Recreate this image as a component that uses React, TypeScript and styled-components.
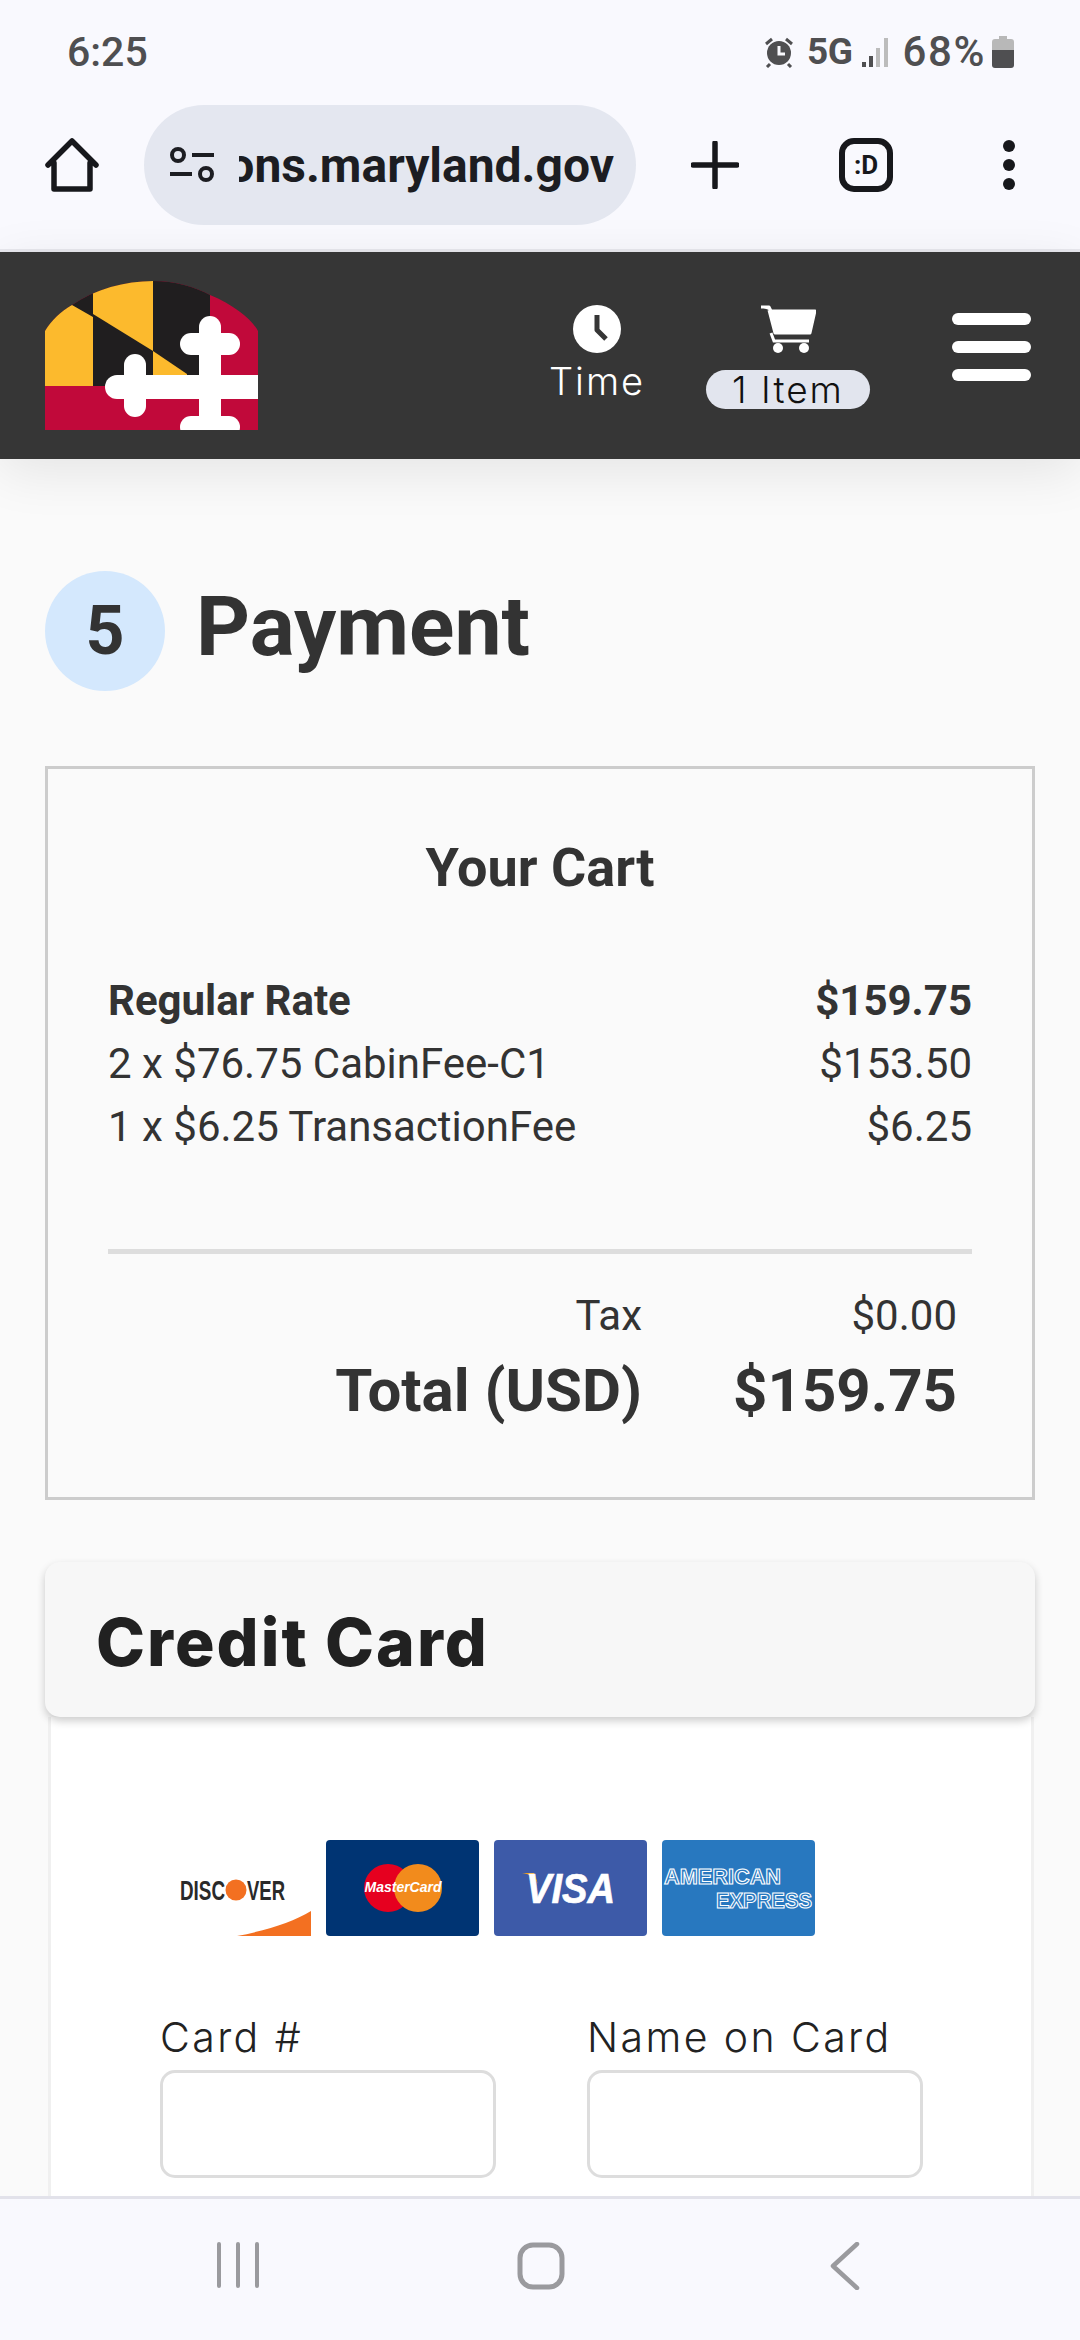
import React from "react";
import styled, { createGlobalStyle } from "styled-components";

const Global = createGlobalStyle`
  html, body { margin: 0; padding: 0; background: #fafafa; }
  * { box-sizing: border-box; }
`;

const Screen = styled.div`
  width: 1080px; height: 2340px; display: flex; flex-direction: column; overflow: hidden;
  font-family: Roboto, "Liberation Sans", sans-serif; background: #fafafa;
`;
const StatusBar = styled.div`
  height: 76px; flex: none; background: #f9f9fe; display: flex; align-items: flex-end; justify-content: space-between;
  padding: 0 66px 0 67px; color: #4f4f51; font-weight: 500; font-size: 41px; line-height: 48px;
`;
const StatusRight = styled.div`
  display: flex; align-items: center; height: 48px;
`;
const FiveG = styled.span` font-size: 37px; font-weight: 700; margin: 0 9px 0 13px; letter-spacing: -.5px; `;
const Percent = styled.span` margin: 0 6px 0 14px; letter-spacing: 1.6px; font-size: 42px; `;
const Toolbar = styled.div`
  height: 176px; flex: none; background: #f9f9fe; border-bottom: 3px solid #e8e8ee;
  display: flex; align-items: center; padding: 5px 0 0 45px;
`;
const AddressPill = styled.div`
  width: 492px; height: 120px; border-radius: 60px; background: #e4e7f0; margin-left: 45px;
  display: flex; align-items: center; padding: 0 21px 0 26px; flex: none;
`;
const UrlClip = styled.div`
  width: 375px; margin-left: 25px; overflow: hidden; display: flex; justify-content: flex-end;
  font-size: 48px; font-weight: 700; color: #1c1d22; white-space: nowrap;
`;
const ToolIcon = styled.div<{ $ml: number }>`
  margin-left: ${p => p.$ml}px; display: flex; flex: none;
`;
const TabGlyph = styled.div`
  width: 54px; height: 54px; border: 6px solid #17181c; border-radius: 15px; display: flex; align-items: center; justify-content: center;
  font-size: 26px; font-weight: 700; color: #17181c; margin-left: 100px; flex: none;
`;
const Header = styled.header`
  height: 207px; flex: none; background: #363636; display: flex; align-items: center; padding: 0 49px 0 45px;
  position: relative; z-index: 2; box-shadow: 0 12px 50px rgba(0,0,0,.09);
`;
const Actions = styled.div` margin-left: auto; display: flex; align-items: flex-start; padding-top: 2px; `;
const ActionItem = styled.div<{ $w: number; $ml?: number }>`
  width: ${p => p.$w}px; margin-left: ${p => p.$ml ?? 0}px; display: flex; flex-direction: column; align-items: center;
`;
const TimeLabel = styled.div`
  font-family: Inter, sans-serif; font-weight: 300; font-size: 38px; line-height: 46px; letter-spacing: 2px; color: #fff; margin-top: 5px;
`;
const ItemBadge = styled.div`
  font-family: Inter, sans-serif; font-weight: 300; font-size: 37px; line-height: 39px; height: 39px; width: 164px; text-align: center; letter-spacing: 2px;
  border-radius: 20px; background: #e2e5ee; color: #111; margin-top: 17px;
`;
const Burger = styled.div`
  width: 79px; margin-left: 82px; margin-top: 8px; display: flex; flex-direction: column; gap: 16px;
`;
const BurgerBar = styled.div` height: 12px; border-radius: 6px; background: #fff; `;
const Main = styled.main`
  flex: 1; min-height: 0; overflow: hidden; padding: 112px 45px 0;
`;
const StepRow = styled.div` display: flex; align-items: center; gap: 31px; `;
const StepCircle = styled.div`
  width: 120px; height: 120px; border-radius: 50%; background: #d4e8fd; color: #333; display: flex; align-items: center; justify-content: center;
  font-size: 68px; font-weight: 700;
`;
const StepTitle = styled.h1`
  margin: 0; font-size: 84px; font-weight: 700; color: #333; line-height: 90px; position: relative; top: -4px;
`;
const CartBox = styled.section`
  margin-top: 75px; height: 734px; border: 3px solid #ccc; padding: 0 60px; background: #fafafa; color: #333;
`;
const CartTitle = styled.h2`
  margin: 70px 0 0; height: 58px; line-height: 58px; text-align: center; font-size: 54px; font-weight: 700; color: #333;
`;
const Rows = styled.div` margin-top: 72px; `;
const Row = styled.div<{ $bold?: boolean }>`
  height: 63px; line-height: 63px; display: flex; justify-content: space-between; font-size: 42px;
  font-weight: ${p => (p.$bold ? 700 : 400)};
`;
const Divider = styled.div` height: 5px; background: #ddd; margin-top: 91px; `;
const TotalLine = styled.div<{ $big?: boolean }>`
  display: grid; grid-template-columns: 1fr 315px; padding-right: 15px; text-align: right;
  font-size: ${p => (p.$big ? 60 : 42)}px; font-weight: ${p => (p.$big ? 700 : 400)};
  height: ${p => (p.$big ? 90 : 62)}px; line-height: ${p => (p.$big ? 90 : 62)}px;
  margin-top: ${p => (p.$big ? -1 : 31)}px;
`;
const CardPanel = styled.section` margin-top: 62px; position: relative; `;
const CardHead = styled.div`
  height: 155px; background: #f7f7f7; border-radius: 15px; padding: 5px 51px 0; display: flex; align-items: center;
  box-shadow: 0 4px 8px rgba(0,0,0,.2); position: relative; z-index: 1;
  font-family: Inter, sans-serif; font-weight: 800; font-size: 66px; color: #212121; letter-spacing: 2px;
`;
const CardBody = styled.div`
  margin: 0 1px 0 3px; background: #fff; border: solid #f0f0f0; border-width: 0 3px; height: 500px; padding: 123px 108px 0 109px;
`;
const LogoRow = styled.div` display: flex; gap: 15px; margin-left: 18px; `;
const PayTile = styled.div<{ $bg: string }>`
  width: 153px; height: 96px; border-radius: 4px; background: ${p => p.$bg}; display: flex; flex: none; overflow: hidden;
`;
const DiscoverTile = styled.div`
  width: 133px; height: 96px; flex: none; display: flex;
`;
const Fields = styled.div` display: flex; gap: 91px; margin-top: 78px; `;
const Field = styled.div` width: 337px; `;
const FieldLabel = styled.label`
  display: block; font-family: Inter, sans-serif; font-weight: 300; font-size: 41px; line-height: 46px; letter-spacing: 2.4px; color: #222; white-space: nowrap;
`;
const TextBox = styled.div`
  height: 108px; margin-top: 10px; border: 3px solid #ddd; border-radius: 15px; background: #fff;
`;
const NavBar = styled.nav`
  height: 144px; flex: none; background: #f9f9fe; border-top: 3px solid #e2e2ea; position: relative; z-index: 3;
  display: flex; align-items: flex-start; padding: 43px 0 0 216px;
`;
const NavIcon = styled.div<{ $ml: number }>` margin-left: ${p => p.$ml}px; display: flex; `;

const Maryland = () => (
  <svg width="213" height="149" viewBox="0 0 213 149" style={{ flex: "none" }}>
    <defs>
      <clipPath id="mdDome">
        <path d="M0 149V50C6 40 16 30 27 24C50 8 80 0 108 0C130 0 150 6 165 14C190 24 208 40 213 50V149Z" />
      </clipPath>
    </defs>
    <g clipPath="url(#mdDome)">
      <rect width="213" height="149" fill="#c1093a" />
      <rect x="0" y="0" width="165" height="105" fill="#201e1f" />
      <path d="M0 0H20L27 24L48 36V105H0Z" fill="#fcba2d" />
      <path d="M48 0H108V70L48 33Z" fill="#fcba2d" />
      <path d="M108 70L142 93V105H108Z" fill="#fcba2d" />
      <g stroke="#fff" fill="none" strokeLinecap="round">
        <path d="M72 106H230" strokeWidth="24" />
        <path d="M90 84V125" strokeWidth="22" />
        <path d="M165 46V160" strokeWidth="22" />
        <path d="M146 63H184" strokeWidth="22" />
        <path d="M146 146H184" strokeWidth="22" />
      </g>
    </g>
  </svg>
);

const Visa = () => (
  <svg width="153" height="96" viewBox="0 0 153 96">
    <path d="M28 33c8 1 13 5 16 11l-4-11z" fill="#f4a51c" />
    <text x="32" y="63" textLength="89" lengthAdjust="spacingAndGlyphs" fontFamily="'Liberation Sans',sans-serif" fontStyle="italic" fontWeight="700" fontSize="42" fill="#fff" stroke="#fff" strokeWidth=".7">VISA</text>
  </svg>
);
const Master = () => (
  <svg width="153" height="96" viewBox="0 0 153 96">
    <circle cx="62" cy="48" r="24" fill="#e6001f" />
    <circle cx="92" cy="48" r="24" fill="#f28b1c" />
    <text x="77" y="52" textAnchor="middle" fontFamily="'Liberation Sans',sans-serif" fontStyle="italic" fontWeight="700" fontSize="14" fill="#fff">MasterCard</text>
  </svg>
);
const Amex = () => (
  <svg width="153" height="96" viewBox="0 0 153 96">
    <text x="2" y="44" textLength="117" lengthAdjust="spacingAndGlyphs" fontFamily="'Liberation Sans',sans-serif" fontWeight="700" fontSize="22" fill="#2878bf" stroke="#fff" strokeWidth="1.1">AMERICAN</text>
    <text x="54" y="68" textLength="96" lengthAdjust="spacingAndGlyphs" fontFamily="'Liberation Sans',sans-serif" fontWeight="700" fontSize="22" fill="#2878bf" stroke="#fff" strokeWidth="1.1">EXPRESS</text>
  </svg>
);
const Discover = () => (
  <svg width="133" height="96" viewBox="0 0 133 96">
    <text x="2" y="60" textLength="45" lengthAdjust="spacingAndGlyphs" fontFamily="'Liberation Sans',sans-serif" fontWeight="700" fontSize="28" fill="#2a2a2a">DISC</text>
    <circle cx="58" cy="50" r="10.5" fill="#f37021" />
    <text x="69" y="60" textLength="38" lengthAdjust="spacingAndGlyphs" fontFamily="'Liberation Sans',sans-serif" fontWeight="700" fontSize="28" fill="#2a2a2a">VER</text>
    <path d="M59 96C90 90 115 82 133 71V96Z" fill="#f37021" />
  </svg>
);

export default function App() {
  return (
    <Screen>
      <Global />
      <StatusBar>
        <span>6:25</span>
        <StatusRight>
          <svg width="30" height="32" viewBox="0 0 30 32">
            <circle cx="15" cy="17" r="12" fill="#4f4f51" />
            <path d="M15 10v8h6" stroke="#f9f9fe" strokeWidth="3" fill="none" />
            <path d="M2 8l6-5M28 8l-6-5M6 28l-3 3M24 28l3 3" stroke="#4f4f51" strokeWidth="3" />
          </svg>
          <FiveG>5G</FiveG>
          <svg width="27" height="32" viewBox="0 0 27 32">
            <rect x="0" y="26" width="4" height="5" fill="#4f4f51" />
            <rect x="7" y="20" width="4" height="11" fill="#4f4f51" />
            <rect x="14" y="12" width="4" height="19" fill="#bcbcbc" />
            <rect x="22" y="2" width="4" height="29" fill="#bcbcbc" />
          </svg>
          <Percent>68%</Percent>
          <svg width="22" height="32" viewBox="0 0 22 32">
            <path d="M7 0h8v3h4a3 3 0 0 1 3 3v8H0V6a3 3 0 0 1 3-3h4z" fill="#b8b8b8" />
            <path d="M0 14h22v15a3 3 0 0 1-3 3H3a3 3 0 0 1-3-3z" fill="#4f4f51" />
          </svg>
        </StatusRight>
      </StatusBar>
      <Toolbar>
        <svg width="54" height="54" viewBox="0 0 54 54" style={{ flex: "none" }}>
          <path d="M3 27L27 3l24 24M9 25v26h36V25" fill="none" stroke="#17181c" strokeWidth="5.5" strokeLinejoin="round" strokeLinecap="round" />
        </svg>
        <AddressPill>
          <svg width="44" height="38" viewBox="0 0 44 38" style={{ flex: "none" }}>
            <circle cx="8" cy="9" r="6" fill="none" stroke="#1c1d22" strokeWidth="4" />
            <path d="M22 9h22M0 28h22" stroke="#1c1d22" strokeWidth="4" />
            <circle cx="36" cy="28" r="6" fill="none" stroke="#1c1d22" strokeWidth="4" />
          </svg>
          <UrlClip>ons.maryland.gov</UrlClip>
        </AddressPill>
        <ToolIcon $ml={55}>
          <svg width="48" height="48" viewBox="0 0 48 48">
            <path d="M24 2v44M2 24h44" stroke="#17181c" strokeWidth="5.5" strokeLinecap="round" />
          </svg>
        </ToolIcon>
        <TabGlyph>:D</TabGlyph>
        <ToolIcon $ml={110}>
          <svg width="12" height="50" viewBox="0 0 12 50">
            <circle cx="6" cy="6" r="6" fill="#17181c" /><circle cx="6" cy="25" r="6" fill="#17181c" /><circle cx="6" cy="44" r="6" fill="#17181c" />
          </svg>
        </ToolIcon>
      </Toolbar>
      <Header>
        <Maryland />
        <Actions>
          <ActionItem $w={110}>
            <svg width="48" height="48" viewBox="0 0 48 48">
              <circle cx="24" cy="24" r="24" fill="#fff" />
              <path d="M24 10v15l9 9" fill="none" stroke="#363636" strokeWidth="5" strokeLinejoin="round" />
            </svg>
            <TimeLabel>Time</TimeLabel>
          </ActionItem>
          <ActionItem $w={164} $ml={54}>
            <svg width="56" height="48" viewBox="0 0 56 48">
              <path d="M1 2h8l2 4h44l-5 22H15L9 5" fill="#fff" stroke="#fff" strokeWidth="3" strokeLinejoin="round" />
              <path d="M11 28l3 8h35" fill="none" stroke="#fff" strokeWidth="3" />
              <circle cx="18" cy="43" r="5" fill="#fff" /><circle cx="44" cy="43" r="5" fill="#fff" />
            </svg>
            <ItemBadge>1 Item</ItemBadge>
          </ActionItem>
          <Burger><BurgerBar /><BurgerBar /><BurgerBar /></Burger>
        </Actions>
      </Header>
      <Main>
        <StepRow>
          <StepCircle>5</StepCircle>
          <StepTitle>Payment</StepTitle>
        </StepRow>
        <CartBox>
          <CartTitle>Your Cart</CartTitle>
          <Rows>
            <Row $bold><span>Regular Rate</span><span>$159.75</span></Row>
            <Row><span>2 x $76.75 CabinFee-C1</span><span>$153.50</span></Row>
            <Row><span>1 x $6.25 TransactionFee</span><span>$6.25</span></Row>
          </Rows>
          <Divider />
          <TotalLine><span>Tax</span><span>$0.00</span></TotalLine>
          <TotalLine $big><span>Total (USD)</span><span>$159.75</span></TotalLine>
        </CartBox>
        <CardPanel>
          <CardHead>Credit Card</CardHead>
          <CardBody>
            <LogoRow>
              <DiscoverTile><Discover /></DiscoverTile>
              <PayTile $bg="#003473"><Master /></PayTile>
              <PayTile $bg="#3d5aa8"><Visa /></PayTile>
              <PayTile $bg="#2878bf"><Amex /></PayTile>
            </LogoRow>
            <Fields>
              <Field><FieldLabel>Card #</FieldLabel><TextBox /></Field>
              <Field><FieldLabel>Name on Card</FieldLabel><TextBox /></Field>
            </Fields>
          </CardBody>
        </CardPanel>
      </Main>
      <NavBar>
        <svg width="44" height="46" viewBox="0 0 44 46" style={{ flex: "none" }}>
          <path d="M3 2v42M22 2v42M41 2v42" stroke="#9a9a9e" strokeWidth="4" strokeLinecap="round" />
        </svg>
        <NavIcon $ml={257}>
          <svg width="48" height="48" viewBox="0 0 48 48">
            <rect x="3" y="3" width="42" height="42" rx="13" fill="none" stroke="#9a9a9e" strokeWidth="5" />
          </svg>
        </NavIcon>
        <NavIcon $ml={265}>
          <svg width="30" height="48" viewBox="0 0 30 48">
            <path d="M27 2L3 24l24 22" fill="none" stroke="#9a9a9e" strokeWidth="4.5" strokeLinecap="round" strokeLinejoin="round" />
          </svg>
        </NavIcon>
      </NavBar>
    </Screen>
  );
}
